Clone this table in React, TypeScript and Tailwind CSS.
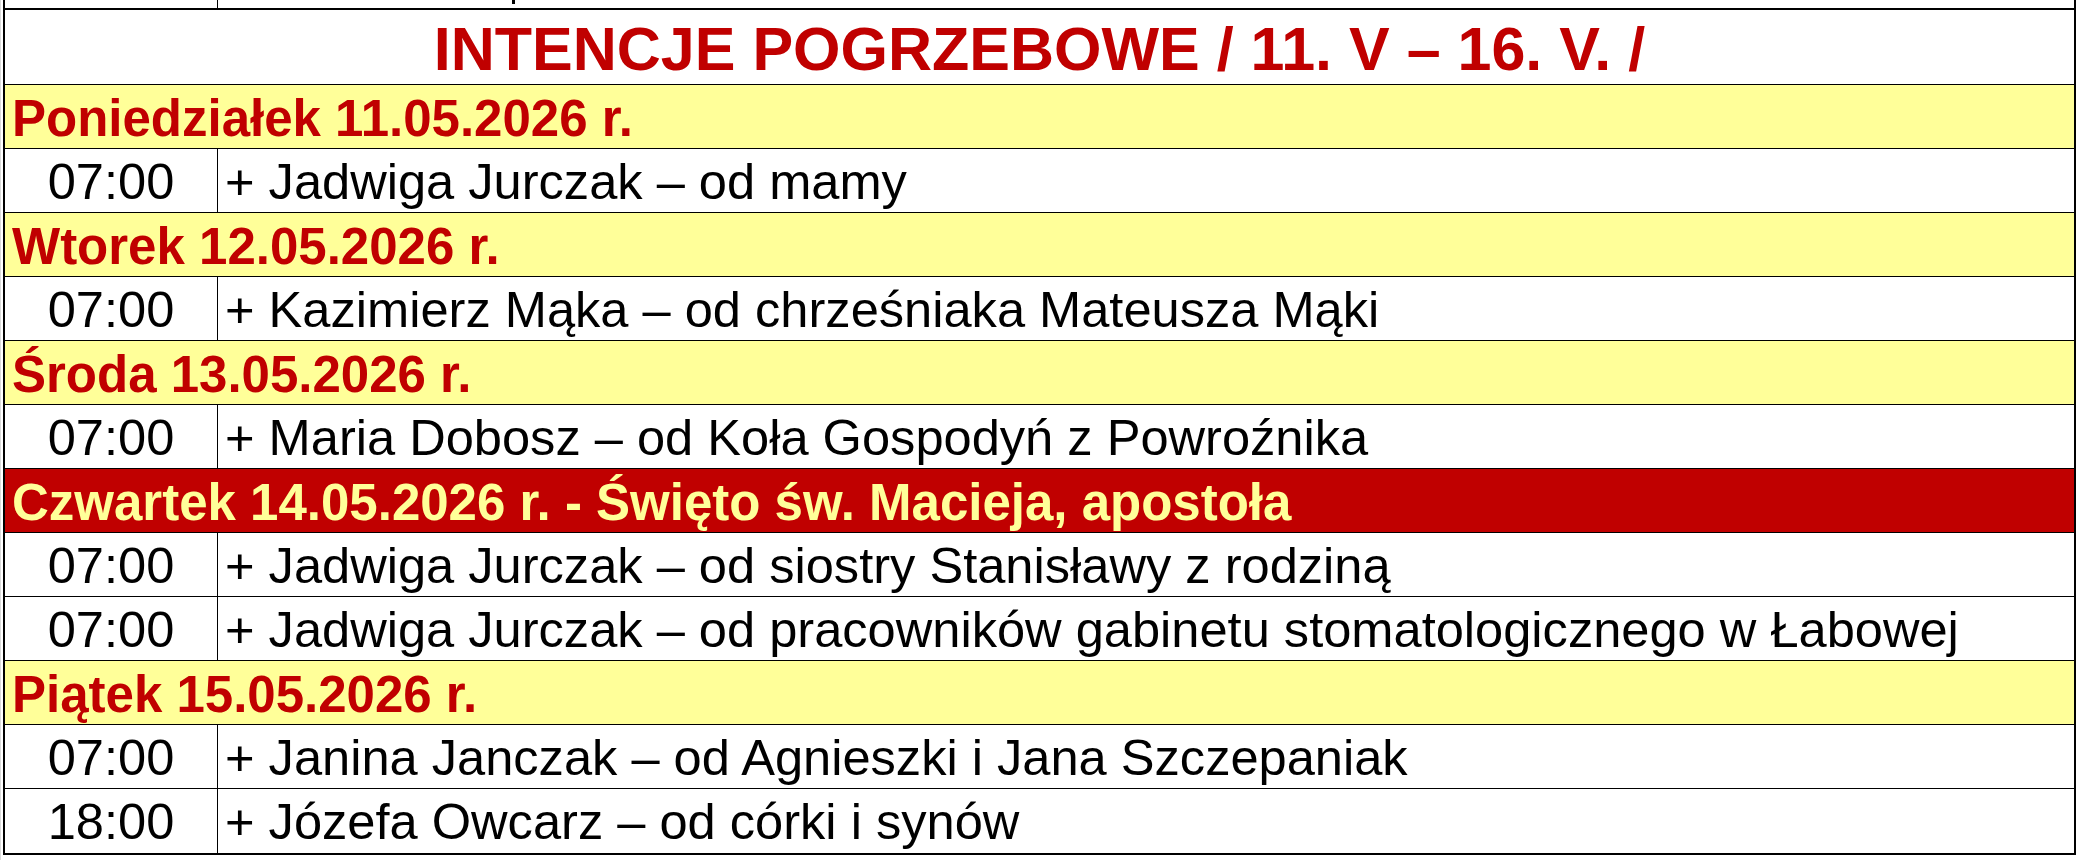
import React from "react";

type Row =
  | { type: "day" | "feast"; text: string }
  | { type: "mass"; time: string; text: string };

const rows: Row[] = [
  { type: "day", text: "Poniedziałek 11.05.2026 r." },
  { type: "mass", time: "07:00", text: "+ Jadwiga Jurczak – od mamy" },
  { type: "day", text: "Wtorek 12.05.2026 r." },
  { type: "mass", time: "07:00", text: "+ Kazimierz Mąka – od chrześniaka Mateusza Mąki" },
  { type: "day", text: "Środa 13.05.2026 r." },
  { type: "mass", time: "07:00", text: "+ Maria Dobosz – od Koła Gospodyń z Powroźnika" },
  { type: "feast", text: "Czwartek 14.05.2026 r. - Święto św. Macieja, apostoła" },
  { type: "mass", time: "07:00", text: "+ Jadwiga Jurczak – od siostry Stanisławy z rodziną" },
  {
    type: "mass",
    time: "07:00",
    text: "+ Jadwiga Jurczak – od pracowników gabinetu stomatologicznego w Łabowej",
  },
  { type: "day", text: "Piątek 15.05.2026 r." },
  { type: "mass", time: "07:00", text: "+ Janina Janczak – od Agnieszki i Jana Szczepaniak" },
  { type: "mass", time: "18:00", text: "+ Józefa Owcarz – od córki i synów" },
];

export default function App() {
  return (
    <div
      className="w-[2078px] h-[860px] bg-white overflow-hidden border-l border-[#dadada]"
      style={{ fontFamily: '"Liberation Sans", Arial, sans-serif' }}
    >
      <div className="ml-[2px] w-[2073px] border-x-2 border-black">
        {/* clipped previous row */}
        <div className="flex h-[8px] overflow-hidden">
          <div className="w-[213px] shrink-0 border-r border-black" />
          <div className="flex-1 flex items-start">
            <div className="ml-[294px] w-[3px] h-[4px] bg-black" />
          </div>
        </div>
        {/* title */}
        <div className="h-[77px] border-t-2 border-b border-black bg-white flex justify-center items-start pt-[9px]">
          <span className="text-[61px] leading-none font-bold text-[#c00000] whitespace-nowrap">
            INTENCJE POGRZEBOWE / 11. V – 16. V. /
          </span>
        </div>
        {rows.map((r, i) => {
          const last = i === rows.length - 1;
          const rowCls = last
            ? "h-[66px] border-b-2 border-black"
            : "h-[64px] border-b border-black";
          if (r.type === "mass") {
            return (
              <div key={i} className={`flex ${rowCls}`}>
                <div className="w-[213px] shrink-0 border-r border-black flex justify-center pt-[8px]">
                  <span className="text-[50.6px] leading-none text-black">{r.time}</span>
                </div>
                <div className="flex-1 pl-[7px] pt-[8px] whitespace-nowrap">
                  <span className="text-[50.6px] leading-none text-black">{r.text}</span>
                </div>
              </div>
            );
          }
          const feast = r.type === "feast";
          return (
            <div
              key={i}
              className={`${rowCls} ${feast ? "bg-[#c00000]" : "bg-[#ffff99]"} pl-[7px] pt-[8px] whitespace-nowrap`}
            >
              <span
                className={`text-[51px] leading-none font-bold ${feast ? "text-[#ffff99]" : "text-[#c00000]"}`}
              >
                {r.text}
              </span>
            </div>
          );
        })}
      </div>
    </div>
  );
}
